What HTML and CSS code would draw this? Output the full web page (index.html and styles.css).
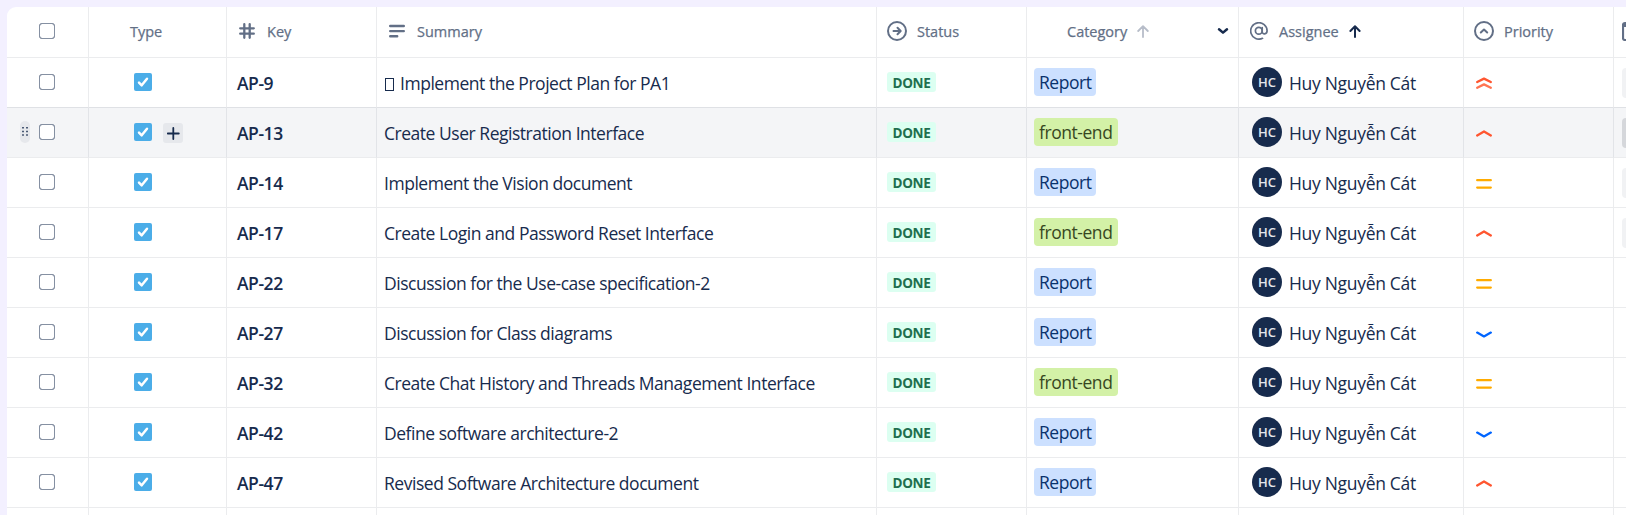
FILE: index.html
```html
<!DOCTYPE html>
<html lang="en">
<head>
<meta charset="utf-8">
<title>Issues</title>
<link rel="stylesheet" href="styles.css">
</head>
<body>
<svg class="defs" width="0" height="0">
  <symbol id="task" viewBox="0 0 18 18"><rect width="18" height="18" rx="2" fill="#4bade8"/><path d="M5 9.600l2.700 2.700L13 5.800" fill="none" stroke="#fff" stroke-width="2.500" stroke-linecap="round" stroke-linejoin="round"/></symbol>
  <symbol id="highest" viewBox="0 0 16 16"><path d="M1.200 6L8 2.600l6.800 3.400" fill="none" stroke="#ff5630" stroke-width="2.300" stroke-linecap="round" stroke-linejoin="round"/><path d="M1.200 11.800L8 8.400l6.800 3.400" fill="none" stroke="#ff7452" stroke-width="2.300" stroke-linecap="round" stroke-linejoin="round"/></symbol>
  <symbol id="high" viewBox="0 0 16 16"><path d="M1.200 9.500L8 5.500l6.800 4" fill="none" stroke="#ff5630" stroke-width="2.300" stroke-linecap="round" stroke-linejoin="round"/></symbol>
  <symbol id="medium" viewBox="0 0 16 16"><path d="M1.200 4.200h13.600M1.200 11.600h13.600" stroke="#ffab00" stroke-width="2.300" stroke-linecap="round"/></symbol>
  <symbol id="low" viewBox="0 0 16 16"><path d="M1.200 6.600L8 10.400l6.800-3.800" fill="none" stroke="#0065ff" stroke-width="2.300" stroke-linecap="round" stroke-linejoin="round"/></symbol>
</svg>
<main class="table" id="table">
  <div class="row head">
    <div class="cell select"><span class="box"></span></div>
    <div class="cell h-type"><span>Type</span></div>
    <div class="cell h-key"><svg width="16" height="16" viewBox="0 0 16 16"><path d="M5.300 1.200v13.600M10.700 1.200v13.600M1.200 5.300h13.600M1.200 10.700h13.600" stroke="#626f86" stroke-width="2.300" stroke-linecap="round"/></svg><span>Key</span></div>
    <div class="cell h-summary"><svg width="16" height="14" viewBox="0 0 16 14"><path d="M1.200 2h13.600M1.200 7.100h13.600M1.200 12.200h7" stroke="#626f86" stroke-width="2.400" stroke-linecap="round"/></svg><span>Summary</span></div>
    <div class="cell h-status"><svg width="20" height="20" viewBox="0 0 20 20" fill="none" stroke="#626f86" stroke-width="2" stroke-linecap="round" stroke-linejoin="round"><circle cx="10" cy="10" r="9"/><path d="M6.500 10h7M10.500 6.800L13.700 10l-3.200 3.200"/></svg><span>Status</span></div>
    <div class="cell h-category"><span>Category</span><svg class="sort" width="12" height="13" viewBox="0 0 12 13" fill="none" stroke="#b7bdc9" stroke-width="1.800" stroke-linecap="round" stroke-linejoin="round"><path d="M6 12V1.300M1.200 6L6 1.200 10.800 6"/></svg><svg class="menu" width="12" height="8" viewBox="0 0 12 8"><path d="M2 2.200l4 3.400 4-3.400" fill="none" stroke="#172b4d" stroke-width="2.500" stroke-linecap="round" stroke-linejoin="round"/></svg></div>
    <div class="cell h-assignee"><svg width="18" height="18" viewBox="0 0 18 18" fill="none" stroke="#626f86" stroke-width="1.700" stroke-linecap="round"><circle cx="8.800" cy="8.800" r="3.400"/><path d="M12.200 5.500v4.300c0 3 4.900 2.700 4.900-1A8.200 8.200 0 1 0 12.500 16.300"/></svg><span>Assignee</span><svg class="sort" width="12" height="13" viewBox="0 0 12 13" fill="none" stroke="#172b4d" stroke-width="2" stroke-linecap="round" stroke-linejoin="round"><path d="M6 12V1.500M1.400 6L6 1.300 10.600 6"/></svg></div>
    <div class="cell h-priority"><svg width="20" height="20" viewBox="0 0 20 20" fill="none" stroke="#626f86" stroke-width="2" stroke-linecap="round" stroke-linejoin="round"><circle cx="10" cy="10" r="9"/><path d="M6.800 11.500L10 8.500l3.200 3"/></svg><span>Priority</span></div>
    <div class="cell h-date"><svg width="18" height="20" viewBox="0 0 18 20"><rect x="1" y="2" width="16" height="17" rx="2" fill="none" stroke="#626f86" stroke-width="2.200"/><path d="M1 4h16" stroke="#626f86" stroke-width="4"/></svg></div>
  </div>
</main>
<script src="table.js"></script>
</body>
</html>
```
FILE: table.js
```js
const issues = [
  ["AP-9", '<i class="glyph"></i>Implement the Project Plan for PA1', "Report", "highest", true],
  ["AP-13", "Create User Registration Interface", "front-end", "high", true],
  ["AP-14", "Implement the Vision document", "Report", "medium", true],
  ["AP-17", "Create Login and Password Reset Interface", "front-end", "high", true],
  ["AP-22", "Discussion for the Use-case specification-2", "Report", "medium", false],
  ["AP-27", "Discussion for Class diagrams", "Report", "low", false],
  ["AP-32", "Create Chat History and Threads Management Interface", "front-end", "medium", false],
  ["AP-42", "Define software architecture-2", "Report", "low", false],
  ["AP-47", "Revised Software Architecture document", "Report", "high", false]
];
const handle = '<svg class="handle" width="10" height="22" viewBox="0 0 10 22"><rect width="10" height="22" rx="5" fill="#e6e8ec"/><path d="M3 6.800h0M7 6.800h0M3 10.400h0M7 10.400h0M3 14h0M7 14h0" stroke="#172b4d" stroke-width="1.500" stroke-linecap="square"/></svg>';
const add = '<svg class="add" width="20" height="20" viewBox="0 0 20 20"><rect width="20" height="20" rx="3" fill="#e6e8ec"/><path d="M10.300 5v11M4.800 10.500h11" stroke="#172b4d" stroke-width="1.800" stroke-linecap="round"/></svg>';
const table = document.getElementById("table");
issues.forEach(([key, summary, category, priority, date], i) => {
  const active = i === 1;
  table.insertAdjacentHTML("beforeend", `<div class="row${active ? " active" : ""}${i === 0 ? " before-active" : ""}">
    <div class="cell select">${active ? handle : ""}<span class="box"></span></div>
    <div class="cell type"><svg width="18" height="18"><use href="#task"/></svg>${active ? add : ""}</div>
    <div class="cell key">${key}</div>
    <div class="cell summary"><span>${summary}</span></div>
    <div class="cell status"><span class="badge">DONE</span></div>
    <div class="cell category"><span class="pill ${category === "Report" ? "blue" : "green"}">${category}</span></div>
    <div class="cell assignee"><span class="avatar">HC</span><span class="name">Huy Nguyễn Cát</span></div>
    <div class="cell priority"><svg width="16" height="16"><use href="#${priority}"/></svg></div>
    <div class="cell date">${date ? '<span class="chip"></span>' : ""}</div>
  </div>`);
});
table.insertAdjacentHTML("beforeend", '<div class="row">' + '<div class="cell"></div>'.repeat(9) + "</div>");
```
FILE: styles.css
```css
* { box-sizing: border-box; }
body { margin: 0; height: 515px; overflow: hidden; background: #f3f0ff; font-family: "Open Sans", "Noto Sans", sans-serif; color: #172b4d; padding: 7px 0 0 7px; }
.defs { position: absolute; }
svg { display: block; flex: none; }
.table { height: 508px; overflow: hidden; background: #fff; border-radius: 9px 0 0 0; }
.row { display: grid; grid-template-columns: 82px 138px 150px 500px 150px 212px 225px 150px 100px; height: 50px; }
.cell { display: flex; align-items: center; border-right: 1px solid #ebecee; border-bottom: 1px solid #ebecee; white-space: nowrap; font-size: 17.5px; min-width: 0; }
.head { height: 51px; }
.head .cell { font-size: 14.5px; font-weight: 500; color: #626f86; padding-bottom: 2px; -webkit-text-stroke: .25px #626f86; }
.active { background: #f4f5f7; }
.active .cell { border-right-color: #e2e4e8; }
.before-active .cell { border-bottom-color: #dfe1e5; }
.select { padding-left: 32px; }
.box { width: 16px; height: 16px; border: 1px solid #8590a2; border-radius: 3px; background: #fff; outline: .4px solid #8590a2; outline-offset: -1px; }
.row:not(.head) .select { padding-bottom: 1px; }
.active .select { padding-left: 13px; gap: 9px; }
.type { padding-left: 45px; gap: 11px; padding-bottom: 1px; }
.add { margin-top: 1px; }
.key { padding-left: 10px; font-weight: 600; letter-spacing: -.45px; padding-top: 1px; }
.summary, .name { padding-top: 1px; }
.summary { padding-left: 7px; letter-spacing: -.47px; }
.name { letter-spacing: -.31px; margin-left: -1px; }
.glyph { display: inline-block; width: 9px; height: 13px; border: 1px solid #172b4d; margin: 0 6px -1px 1px; }
.status { padding: 0 0 1px 10px; }
.badge { width: 49px; height: 20px; line-height: 22px; border-radius: 3px; background: #dcfff1; color: #216e4e; font-size: 13.5px; font-weight: 700; letter-spacing: -.3px; text-align: center; }
.category { padding: 0 0 1px 7px; }
.pill { height: 28px; line-height: 28px; border-radius: 4px; padding-left: 5px; letter-spacing: -.45px; }
.blue { width: 62px; background: #cce0ff; color: #09326c; }
.green { width: 84px; background: #d3f1a7; color: #37471f; }
.assignee { padding-left: 13px; gap: 8px; }
.avatar { width: 30px; height: 30px; border-radius: 50%; background: #172b4d; color: #e4e6ea; font-size: 13px; font-weight: 600; line-height: 30px; text-align: center; margin-bottom: 1px; }
.priority { padding: 2px 0 0 12px; }
.date { padding-left: 8px; }
.chip { width: 80px; height: 30px; border-radius: 4px; background: #f1f2f4; }
.active .chip { background: #d5d7db; }
.head .h-type { padding-left: 41px; }
.h-key { padding-left: 12px; gap: 12px; }
.h-summary { padding-left: 12px; gap: 12px; }
.h-status { padding-left: 10px; gap: 10px; }
.h-category { padding-left: 40px; gap: 10px; }
.menu { margin-left: auto; margin-right: 9px; }
.h-assignee { padding-left: 11px; gap: 11px; }
.h-assignee .sort { margin-left: -1px; }
.h-priority { padding-left: 10px; gap: 10px; }
.h-date { padding-left: 8px; }
```
